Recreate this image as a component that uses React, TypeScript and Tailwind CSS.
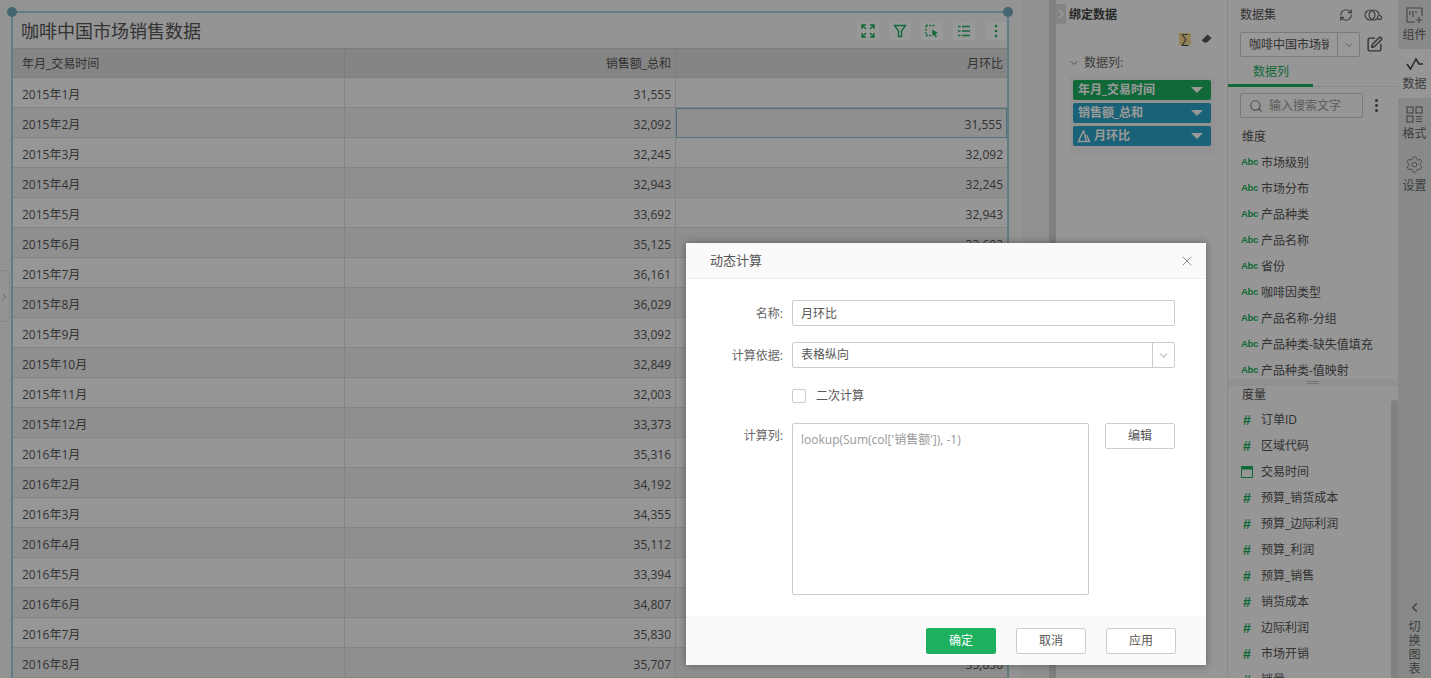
import { ChevronDown, ChevronLeft, ChevronRight, RefreshCw, Search, SquarePen, X, Settings } from "lucide-react";

const months = [
  ["2015年1月", "31,555", ""],
  ["2015年2月", "32,092", "31,555"],
  ["2015年3月", "32,245", "32,092"],
  ["2015年4月", "32,943", "32,245"],
  ["2015年5月", "33,692", "32,943"],
  ["2015年6月", "35,125", "33,692"],
  ["2015年7月", "36,161", "35,125"],
  ["2015年8月", "36,029", "36,161"],
  ["2015年9月", "33,092", "36,029"],
  ["2015年10月", "32,849", "33,092"],
  ["2015年11月", "32,003", "32,849"],
  ["2015年12月", "33,373", "32,003"],
  ["2016年1月", "35,316", "33,373"],
  ["2016年2月", "34,192", "35,316"],
  ["2016年3月", "34,355", "34,192"],
  ["2016年4月", "35,112", "34,355"],
  ["2016年5月", "33,394", "35,112"],
  ["2016年6月", "34,807", "33,394"],
  ["2016年7月", "35,830", "34,807"],
  ["2016年8月", "35,707", "35,830"],
];

const dimensions = ["市场级别", "市场分布", "产品种类", "产品名称", "省份", "咖啡因类型", "产品名称-分组", "产品种类-缺失值填充", "产品种类-值映射"];
const measures = ["订单ID", "区域代码", "交易时间", "预算_销货成本", "预算_边际利润", "预算_利润", "预算_销售", "销货成本", "边际利润", "市场开销", "销量"];

function ToolButton({ children }: { children: React.ReactNode }) {
  return (
    <div className="flex h-[18px] w-[22px] items-center justify-center rounded-[3px] bg-white text-[#1db05f]">
      <svg width="16" height="16" viewBox="0 0 16 16" fill="none" stroke="currentColor" strokeWidth="1.4">
        {children}
      </svg>
    </div>
  );
}

function Pill({ color, label, delta }: { color: string; label: string; delta?: boolean }) {
  return (
    <div className={`flex h-5 items-center rounded-[2px] pl-[5px] pr-[8px] text-[12px] font-bold text-white ${color}`}>
      {delta && (
        <svg width="14" height="14" viewBox="0 0 14 14" fill="none" stroke="currentColor" strokeWidth="1.5" className="mr-[3px] -ml-[1px]">
          <path d="M6.5 1.5 1.5 12.5h11L9.5 6" />
          <path d="M6.5 1.5 9.5 12.5" />
        </svg>
      )}
      <span className="flex-1">{label}</span>
      <span className="h-0 w-0 border-x-[6px] border-t-[6px] border-x-transparent border-t-white" />
    </div>
  );
}

function FieldRow({ icon, label }: { icon: React.ReactNode; label: string }) {
  return (
    <div className="flex h-[26px] items-center text-[12px] text-[#555]">
      <span className="flex w-[20px] shrink-0 justify-start">{icon}</span>
      <span className="whitespace-nowrap">{label}</span>
    </div>
  );
}

const abc = <span className="-mt-[2px] font-['Liberation_Sans',sans-serif] text-[9.5px] font-bold leading-none tracking-[-0.3px] text-[#1db05f]">Abc</span>;
const hash = <span className="pl-[2px] font-['Liberation_Sans',sans-serif] text-[14px] font-bold leading-none text-[#1db05f]">#</span>;
const calendar = (
  <svg width="12" height="12" viewBox="0 0 12 12" className="text-[#1db05f]" fill="none" stroke="currentColor">
    <rect x="0.5" y="0.5" width="11" height="11" />
    <rect x="0.5" y="0.5" width="11" height="2.5" fill="currentColor" />
  </svg>
);

function SideTab({ icon, label, className }: { icon: React.ReactNode; label: string; className: string }) {
  return (
    <div className={`flex flex-col items-center pt-[4px] text-[12px] leading-[18px] text-[#666] ${className}`}>
      <div className="flex h-[22px] items-center">{icon}</div>
      <span>{label}</span>
    </div>
  );
}

function FormRow({ label, children }: { label: string; children: React.ReactNode }) {
  return (
    <div className="flex items-center">
      <span className="w-[106px] pr-[9px] pt-[1px] text-right text-[12px] text-[#666]">{label}</span>
      {children}
    </div>
  );
}

function Handle({ className }: { className: string }) {
  return <span className={`absolute h-[10px] w-[10px] rounded-full bg-[#6ea9bb] ${className}`} />;
}

export default function App() {
  return (
    <div className="relative flex h-[678px] w-[1431px] overflow-hidden bg-white font-['Open_Sans','Noto_Sans_CJK_SC',sans-serif] text-[#555]">
      {/* canvas */}
      <div className="flex h-full w-[1022px] shrink-0 bg-[#f5f5f5] pl-[11px] pt-[11px]">
        <div className="relative h-[700px] w-[998px] border-2 border-b-0 border-[#a4cfdc] bg-[#f7f7f7]">
          <Handle className="-left-[6px] -top-[6px]" />
          <Handle className="-right-[6px] -top-[6px]" />
          <div className="flex h-[35px] items-center justify-between pl-[8px]">
            <span className="text-[18px] leading-none text-[#555]">咖啡中国市场销售数据</span>
            <div className="flex items-center gap-[10px]">
              <ToolButton>
                <path d="M2 6V2h4M10 2h4v4M14 10v4h-4M6 14H2v-4M3 3l3 3M13 3l-3 3M13 13l-3-3M3 13l3-3" />
              </ToolButton>
              <ToolButton>
                <path d="M2.5 2.5h11L9.5 8v5.5h-3V8z" />
              </ToolButton>
              <ToolButton>
                <path d="M2 2.5h10M2 2.5v10h5" strokeDasharray="2 1.3" />
                <path d="M8 6.5 14 10l-2.5 1 1.5 3-1.5.5-1.2-2.8L8.5 13z" fill="currentColor" stroke="none" />
              </ToolButton>
              <ToolButton>
                <path d="M2 3.5h2.5M6 3.5h8M2 8h2.5M6 8h8M2 12.5h2.5M6 12.5h8" strokeWidth="1.6" />
              </ToolButton>
              <ToolButton>
                <circle cx="8" cy="3" r="1.3" fill="currentColor" stroke="none" />
                <circle cx="8" cy="8" r="1.3" fill="currentColor" stroke="none" />
                <circle cx="8" cy="13" r="1.3" fill="currentColor" stroke="none" />
              </ToolButton>
            </div>
          </div>
          <div className="grid grid-cols-[332px_331px_331px] text-[12px]">
            <div className="flex h-[30px] items-center border-y border-r border-[#d0d0d0] bg-[#dedede] pl-[9px] pt-[1px]">年月_交易时间</div>
            <div className="flex h-[30px] items-center justify-end border-y border-r border-[#d0d0d0] bg-[#dedede] pr-[4px] pt-[1px]">销售额_总和</div>
            <div className="flex h-[30px] items-center justify-end border-y border-[#d0d0d0] bg-[#dedede] pr-[4px] pt-[1px]">月环比</div>
            {months.map((row, i) => {
              const bg = i % 2 === 0 ? "bg-[#fbfbfb]" : "bg-[#efefef]";
              return (
                <div key={row[0]} className="contents">
                  <div className={`flex h-[30px] items-center border-b border-r border-[#dcdcdc] pl-[9px] pt-[4px] ${bg}`}>{row[0]}</div>
                  <div className={`flex h-[30px] items-center justify-end border-b border-r border-[#dcdcdc] pr-[4px] pt-[4px] ${bg}`}>{row[1]}</div>
                  <div className={`flex h-[30px] items-center justify-end pr-[4px] pt-[4px] ${bg} ${i === 1 ? "border-[1.5px] border-[#86bccd]" : "border-b border-[#dcdcdc]"}`}>{row[2]}</div>
                </div>
              );
            })}
          </div>
          <div className="absolute -left-[13px] top-[257px] flex h-[52px] w-[10px] items-center justify-center rounded-r-[6px] border border-l-0 border-[#ddd] bg-[#f7f7f7] text-[#888]">
            <ChevronRight size={11} />
          </div>
        </div>
      </div>

      {/* canvas gutter and scrollbar */}
      <div className="h-full w-[27px] shrink-0 bg-[#f1f1f1]" />
      <div className="h-full w-[7px] shrink-0 bg-[#d4d4d4]" />

      {/* binding panel */}
      <div className="relative h-full w-[172px] shrink-0 border-r border-[#e4e4e4] bg-[#fafafa]">
        <div className="absolute left-0 top-[4px] flex h-5 w-[10px] items-center justify-center bg-[#dcdcdc] text-white">
          <ChevronRight size={16} strokeWidth={2} className="shrink-0" />
        </div>
        <div className="pl-[13px] pt-[6px] text-[12px] font-bold leading-[18px] text-[#444]">绑定数据</div>
        <div className="mt-[6px] flex h-[18px] items-center justify-end gap-[10px] pr-[15px]">
          <span className="flex h-[12px] w-[12px] items-center justify-center bg-[#f5d98a] text-[12px] leading-none text-[#444]">∑</span>
          <svg width="11" height="10" viewBox="0 0 11 10" className="text-[#555]">
            <path d="M6.5.5 10.5 4 6 8.5H3L.8 6.3z" fill="currentColor" />
          </svg>
        </div>
        <div className="mt-[6px] flex h-[18px] items-center pl-[12px] text-[12px] text-[#666]">
          <ChevronDown size={12} className="mr-[4px] text-[#888]" />
          数据列:
        </div>
        <div className="ml-[13px] mt-[4px] flex w-[146px] flex-col gap-[3px] bg-[#f3f3f3] px-[4px] py-[4px] pb-[8px]">
          <Pill color="bg-[#1db05f]" label="年月_交易时间" />
          <Pill color="bg-[#2ba3c6]" label="销售额_总和" />
          <Pill color="bg-[#2ba3c6]" label="月环比" delta />
        </div>
      </div>

      {/* dataset panel */}
      <div className="relative h-full w-[170px] shrink-0 bg-[#fafafa]">
        <div className="flex h-[30px] items-center pl-[12px] pr-[16px] text-[12px]">
          <span className="flex-1 text-[#555]">数据集</span>
          <RefreshCw size={14} className="mr-[11px] text-[#666]" />
          <svg width="18" height="14" viewBox="0 0 18 14" fill="none" stroke="#666" strokeWidth="1.2">
            <circle cx="6" cy="7" r="5" />
            <circle cx="10" cy="7" r="5" />
            <circle cx="15.5" cy="9.5" r="2" fill="#fafafa" />
          </svg>
        </div>
        <div className="ml-[12px] mt-[2px] flex items-center">
          <div className="flex h-[25px] w-[120px] items-center rounded-[2px] border border-[#ccc] bg-white text-[12px]">
            <div className="w-[96px] pl-[8px]">
              <div className="w-[80px] overflow-hidden whitespace-nowrap">咖啡中国市场销售数据</div>
            </div>
            <span className="flex h-full flex-1 items-center justify-center border-l border-[#ccc] text-[#aaa]">
              <ChevronDown size={12} />
            </span>
          </div>
          <SquarePen size={17} className="ml-[6px] text-[#555]" />
        </div>
        <div className="relative mt-[5px] h-[25px] border-b border-[#e6e6e6]">
          <span className="ml-[25px] block text-[12px] leading-[20px] text-[#1db05f]">数据列</span>
          <span className="absolute -bottom-[1px] left-0 h-[3px] w-[85px] bg-[#1db05f]" />
        </div>
        <div className="ml-[12px] mt-[6px] flex items-center">
          <div className="flex h-[25px] w-[123px] items-center rounded-[2px] border border-[#ccc] pl-[8px] text-[12px] text-[#999]">
            <Search size={14} className="mr-[6px] text-[#888]" />
            输入搜索文字
          </div>
          <div className="ml-[12px] flex flex-col gap-[2px]">
            <span className="h-[3px] w-[3px] rounded-full bg-[#555]" />
            <span className="h-[3px] w-[3px] rounded-full bg-[#555]" />
            <span className="h-[3px] w-[3px] rounded-full bg-[#555]" />
          </div>
        </div>
        <div className="ml-[14px] mt-[10px] h-[18px] text-[12px] leading-[18px]">维度</div>
        <div className="ml-[13px] mt-[4px]">
          {dimensions.map((d) => (
            <FieldRow key={d} icon={abc} label={d} />
          ))}
        </div>
        <div className="-mt-[5px] flex h-[7px] flex-col items-center justify-center gap-[1px] bg-[#f1f1f1]">
          <span className="h-px w-[12px] bg-[#c4c4c4]" />
          <span className="h-px w-[12px] bg-[#c4c4c4]" />
        </div>
        <div className="ml-[14px] h-[18px] text-[12px] leading-[18px]">度量</div>
        <div className="ml-[13px] mt-[3px] h-[300px] overflow-hidden">
          {measures.map((m) => (
            <FieldRow key={m} icon={m === "交易时间" ? calendar : hash} label={m} />
          ))}
        </div>
        <span className="absolute bottom-0 right-0 top-[400px] w-[7px] rounded-t-[3px] bg-[#d8d8d8]" />
      </div>

      {/* side tabs */}
      <div className="flex h-full w-[33px] shrink-0 flex-col bg-[#e3e6e4]">
        <SideTab
          className="h-[49px]"
          label="组件"
          icon={
            <svg width="17" height="17" viewBox="0 0 17 17" fill="none" stroke="#777" strokeWidth="1.2">
              <path d="M9 15H1V1h15v8" />
              <path d="M4 4v4M7 4v6M10 4v2M13 10v6M10 13h6" />
            </svg>
          }
        />
        <SideTab
          className="h-[49px] bg-[#fafafa]"
          label="数据"
          icon={
            <svg width="18" height="14" viewBox="0 0 18 14" fill="none" stroke="#444" strokeWidth="1.5">
              <path d="M1 7 4.5 12 10 2l3 5 4 0" />
            </svg>
          }
        />
        <SideTab
          className="h-[50px] pt-[5px]"
          label="格式"
          icon={
            <svg width="17" height="17" viewBox="0 0 17 17" fill="none" stroke="#777" strokeWidth="1.2">
              <rect x="1" y="1" width="6" height="6" />
              <rect x="10" y="1" width="6" height="6" />
              <rect x="1" y="10" width="6" height="6" />
              <path d="M10 10.5h6M10 13h6M10 15.5h6" />
            </svg>
          }
        />
        <SideTab className="h-[50px] pt-[5px] [&>span]:mt-[2px]" label="设置" icon={<Settings size={19} className="text-[#777]" strokeWidth={1.2} />} />
        <div className="flex flex-1 flex-col items-center justify-end pb-[2px] text-[12px] leading-[14px] text-[#666]">
          <ChevronLeft size={15} className="mb-[5px]" />
          <span>切</span>
          <span>换</span>
          <span>图</span>
          <span>表</span>
        </div>
      </div>

      {/* dim layer */}
      <div className="absolute inset-0 bg-black/40" />

      {/* dialog */}
      <div className="absolute left-[686px] top-[243px] flex h-[422px] w-[520px] flex-col bg-white shadow-[0_0_8px_rgba(0,0,0,0.35)]">
        <div className="flex h-[36px] items-center justify-between border-b border-[#eee] bg-[#fafafa] pl-[24px] pr-[11px] text-[13px] text-[#555]">
          动态计算
          <X size={16} strokeWidth={1.1} className="text-[#666]" />
        </div>
        <div className="flex flex-1 flex-col pt-[21px]">
          <FormRow label="名称:">
            <div className="flex h-[26px] w-[383px] items-center rounded-[2px] border border-[#ccc] pl-[8px] pt-[1px] text-[12px]">月环比</div>
          </FormRow>
          <div className="mt-[16px]">
            <FormRow label="计算依据:">
              <div className="flex h-[26px] w-[383px] items-center rounded-[2px] border border-[#ccc] pl-[8px] text-[12px]">
                <span className="flex-1">表格纵向</span>
                <span className="flex h-full w-[22px] items-center justify-center border-l border-[#ccc] text-[#bbb]">
                  <ChevronDown size={13} />
                </span>
              </div>
            </FormRow>
          </div>
          <div className="ml-[106px] mt-[18px] flex items-center text-[12px]">
            <span className="mr-[10px] h-[14px] w-[14px] rounded-[2px] border border-[#ccc]" />
            <span className="pt-[1px]">二次计算</span>
          </div>
          <div className="mt-[18px] flex items-start">
            <span className="w-[106px] pr-[9px] pt-[4px] text-right text-[12px] leading-[18px] text-[#666]">计算列:</span>
            <div className="h-[172px] w-[297px] rounded-[2px] border border-[#ccc] pl-[8px] pt-[7px] text-[12px] leading-[18px] text-[#999]">lookup(Sum(col['销售额']), -1)</div>
            <div className="ml-[16px] flex h-[26px] w-[70px] items-center justify-center rounded-[2px] border border-[#ccc] text-[12px]">编辑</div>
          </div>
        </div>
        <div className="flex h-[49px] items-center justify-end gap-[20px] bg-[#fafafa] pr-[30px] text-[12px]">
          <div className="flex h-[26px] w-[70px] items-center justify-center rounded-[2px] bg-[#1db05f] text-white">确定</div>
          <div className="flex h-[26px] w-[70px] items-center justify-center rounded-[2px] border border-[#ccc] bg-white">取消</div>
          <div className="flex h-[26px] w-[70px] items-center justify-center rounded-[2px] border border-[#ccc] bg-white">应用</div>
        </div>
      </div>
    </div>
  );
}
